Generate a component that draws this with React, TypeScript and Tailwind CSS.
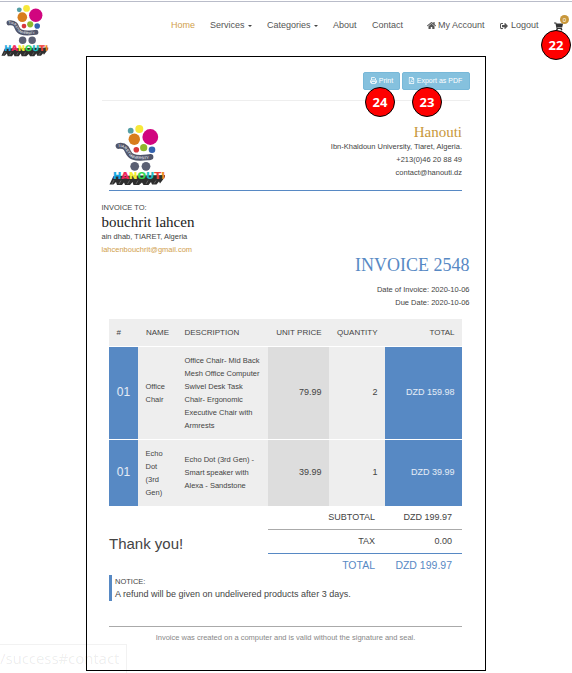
import React from "react";
import { FaHome, FaSignOutAlt, FaShoppingCart, FaRegFilePdf } from "react-icons/fa";

const letters: [string, string][] = [
  ["H", "#18a8e0"],
  ["A", "#f0265c"],
  ["N", "#f5ee30"],
  ["O", "#35d850"],
  ["U", "#20bcc4"],
  ["T", "#f04038"],
  ["I", "#f08a20"],
];

function Logo({ className, id }: { className: string; id: string }) {
  return (
    <svg viewBox="0 0 57 61" preserveAspectRatio="none" className={className}>
      <circle cx="21.7" cy="5.7" r="2.9" fill="#559fa5" />
      <circle cx="30.3" cy="4" r="4" fill="#f7e83a" />
      <circle cx="41.3" cy="12" r="7.9" fill="#d1057f" />
      <circle cx="25.3" cy="14.3" r="5.7" fill="#d87d1c" />
      <circle cx="27.3" cy="24.7" r="2.8" fill="#d8383c" />
      <circle cx="34.7" cy="22.7" r="3.6" fill="#8fb82c" />
      <circle cx="43" cy="24.7" r="3.3" fill="#3462ae" />
      <path d="M9.5 21 C12 20.5 15 21 17 23 C20 27 19 30 24 31.8 C30 34 36 32.5 41.5 32" fill="none" stroke="#50556a" strokeWidth="5.8" strokeLinecap="round" />
      <path id={id} d="M9 22 C12 21.8 15 22.5 16.6 25 C20 29.5 20 32 25 33.2 C31 35 37 34 44 33.4" fill="none" />
      <text fontSize="3.8" fontWeight="700" fill="#d8d9df" fontFamily="Liberation Sans, sans-serif">
        <textPath href={"#" + id} textLength="36">TIARET UNIVERSITY</textPath>
      </text>
      <circle cx="25.7" cy="41.3" r="4.4" fill="#5a5f73" />
      <circle cx="37" cy="41.3" r="4.4" fill="#5a5f73" />
      <path d="M4.5 51 L0.5 59.5 H4.5 L7 57 L8 60 H13 L15 57.5 L16 60 H21 L23.5 57 L24.5 60 H30 L33 57.5 L34.5 60 H39.5 L42 57 L43 59.5 H47.5 L50 56.5 L51 58.5 L56 52 V50 Z" fill="#2e2e2e" />
      <path d="M3 59 L5 55 M10 59 L12 55.5 M18.5 59 L20.5 55.5 M27 59 L29 55.5 M37 59 L39 55.5 M45 58.5 L47 55.5" stroke="#777" strokeWidth=".7" />
      <text x="3.9" y="54.3" fontSize="9.2" fontWeight="700" strokeWidth=".2" fontFamily="DejaVu Sans, sans-serif" textLength="52" lengthAdjust="spacingAndGlyphs">
        {letters.map(([l, c]) => (
          <tspan key={l} fill={c} stroke={c}>{l}</tspan>
        ))}
      </text>
    </svg>
  );
}

function PrintIcon() {
  return (
    <svg viewBox="0 0 14 14" className="h-[7px] w-[7px]" fill="none" stroke="currentColor" strokeWidth="1.6">
      <path d="M3 6V1h6l2 2v3M3 11H1V8q0-2 2-2h8q2 0 2 2v3h-2M3 9h8v4H3z" />
    </svg>
  );
}

function Step({ n, className }: { n: string; className: string }) {
  return (
    <div className={`absolute flex size-[30px] items-center justify-center rounded-full border border-black bg-[#fe0000] font-['Open_Sans','Noto_Sans',sans-serif] text-[13px] font-bold leading-none text-white ${className}`}>
      {n}
    </div>
  );
}

function Caret() {
  return <i className="ml-[3px] inline-block border-x-2 border-t-2 border-x-transparent border-t-[#444]" />;
}

const cols = "grid grid-cols-[29px_39px_91px_61px_56px_77px]";

const items = [
  { name: ["Office", "Chair"], desc: ["Office Chair- Mid Back", "Mesh Office Computer", "Swivel Desk Task", "Chair- Ergonomic", "Executive Chair with", "Armrests"], price: "79.99", qty: "2", total: "DZD 159.98", h: "h-[92px]" },
  { name: ["Echo", "Dot", "(3rd", "Gen)"], desc: ["Echo Dot (3rd Gen) -", "Smart speaker with", "Alexa - Sandstone"], price: "39.99", qty: "1", total: "DZD 39.99", h: "h-[66px]" },
];

function Lines({ lines }: { lines: string[] }) {
  return (
    <div className="flex flex-col justify-center bg-[#eee] pb-px pl-[7.5px]">
      {lines.map((l) => (
        <div key={l} className="h-[13px] whitespace-nowrap">{l}</div>
      ))}
    </div>
  );
}

export default function App() {
  return (
    <div className="relative h-[673px] w-[572px] overflow-hidden bg-white font-['Liberation_Sans',Arial,sans-serif] text-[7.5px] leading-[13px] text-[#444]">
      <header className="flex h-[56px] pt-px">
        <div className="w-[171px] border-t border-[#b9bcc9] pl-px pt-[3px]">
          <Logo id="arc-nav" className="h-[52px] w-[48px]" />
        </div>
        <nav className="flex flex-1 whitespace-nowrap border-t border-[#b9bcc9] pt-[17px] text-[9px] text-[#555]">
          <span className="w-[39px] text-[#d0a04c]">Home</span>
          <span className="flex w-[57px] items-center self-start">Services<Caret /></span>
          <span className="flex w-[66px] items-center self-start">Categories<Caret /></span>
          <span className="w-[39px]">About</span>
          <span className="w-[55px]">Contact</span>
          <span className="flex w-[73px] items-center gap-[2px] self-start"><FaHome className="size-[9px]" />My Account</span>
          <span className="flex w-[54px] items-center gap-[3px] self-start"><FaSignOutAlt className="size-[8px]" />Logout</span>
          <span className="relative pt-[3px] text-[#333]">
            <FaShoppingCart className="size-[9px]" />
            <b className="absolute -top-[4px] left-[6px] flex size-[9px] items-center justify-center rounded-full bg-[#c8973a] text-[6px] font-normal leading-none text-white">0</b>
          </span>
        </nav>
      </header>

      <main className="ml-[86px] h-[615px] w-[400px] border border-black px-[15px] pt-[15px]">
        <div className="flex h-[29px] items-start justify-end gap-[2px] border-b border-[#eee] text-[7px] text-white">
          <button className="flex h-[18px] w-[37px] items-center justify-center gap-[2px] rounded-[2px] border border-[#78b8d8] bg-[#85c1de] pb-px"><PrintIcon />Print</button>
          <button className="flex h-[18px] w-[68px] items-center justify-center gap-[2px] whitespace-nowrap rounded-[2px] border border-[#78b8d8] bg-[#85c1de] pb-px pr-[2px]"><FaRegFilePdf className="size-[7px]" />Export as PDF</button>
        </div>

        <div className="ml-[7px] mr-[8px] mt-[24px] flex h-[66px] justify-between border-b border-[#5789c4]">
          <Logo id="arc-invoice" className="h-[61px] w-[57px]" />
          <div className="text-right">
            <h2 className="h-[15px] font-['Liberation_Serif',serif] text-[15px] leading-[15px] text-[#c8973a]">Hanouti</h2>
            <div>Ibn-Khaldoun University, Tiaret, Algeria.</div>
            <div>+213(0)46 20 88 49</div>
            <div>contact@hanouti.dz</div>
          </div>
        </div>

        <section className="-ml-[0.5px] h-[65px] pt-[10px]">
          <div className="h-[12px]">INVOICE TO:</div>
          <h2 className="h-[17px] font-['Liberation_Serif',serif] text-[15px] leading-[19px] text-[#222]">bouchrit lahcen</h2>
          <div>ain dhab, TIARET, Algeria</div>
          <div className="text-[#d0a04c]">lahcenbouchrit@gmail.com</div>
        </section>

        <section className="mr-[0.5px] h-[63px] text-right">
          <h1 className="h-[27px] font-['Liberation_Serif',serif] text-[18px] leading-[19px] text-[#5789c4]">INVOICE 2548</h1>
          <div>Date of Invoice: 2020-10-06</div>
          <div>Due Date: 2020-10-06</div>
        </section>

        <div className="ml-[7px] w-[353px]">
          <div className={`${cols} h-[27px] items-center bg-[#eee] text-[8px] whitespace-nowrap`}>
            <span className="pl-[7.5px]">#</span>
            <span className="pl-[8px]">NAME</span>
            <span className="pl-[7.5px]">DESCRIPTION</span>
            <span className="pr-[7.5px] text-right">UNIT PRICE</span>
            <span className="pr-[7.5px] text-right">QUANTITY</span>
            <span className="pr-[7.5px] text-right">TOTAL</span>
          </div>
          {items.map((it) => (
            <div key={it.total} className={`${cols} ${it.h} mt-px`}>
              <div className="flex items-center justify-center bg-[#5789c4] pb-[2px] text-[12px] text-white/85">01</div>
              <Lines lines={it.name} />
              <Lines lines={it.desc} />
              <div className="flex items-center justify-end bg-[#ddd] pb-[2px] pr-[7.5px] text-[9px]">{it.price}</div>
              <div className="flex items-center justify-end bg-[#eee] pb-[2px] pr-[7.5px] text-[9px]">{it.qty}</div>
              <div className="flex items-center justify-end bg-[#5789c4] pb-[2px] pr-[7.5px] text-[9px] text-white/85">{it.total}</div>
            </div>
          ))}

          <div className="flex h-[69px] justify-between">
            <div className="pt-[28px] text-[15px] leading-[20px]">Thank you!</div>
            <div className="w-[194px] text-right text-[9px] [&>div]:grid [&>div]:grid-cols-[107px_77px] [&>div]:items-center">
              <div className="h-[24px] border-b border-[#aaa]"><span>SUBTOTAL</span><span>DZD 199.97</span></div>
              <div className="h-[24px] border-b border-[#5789c4]"><span>TAX</span><span>0.00</span></div>
              <div className="h-[23px] text-[10.5px] text-[#5789c4]"><span>TOTAL</span><span>DZD 199.97</span></div>
            </div>
          </div>

          <div className="h-[26px] border-l-[3px] border-[#5789c4] pl-[3px]">
            <div>NOTICE:</div>
            <div className="text-[9px] leading-[12px]">A refund will be given on undelivered products after 3 days.</div>
          </div>

          <footer className="mt-[25px] border-t border-[#aaa] pt-[4px] text-center text-[#888]">
            Invoice was created on a computer and is valid without the signature and seal.
          </footer>
        </div>
      </main>

      <Step n="22" className="left-[541px] top-[30px]" />
      <Step n="24" className="left-[365px] top-[87px]" />
      <Step n="23" className="left-[412px] top-[87px]" />

      <div className="absolute left-0 top-[644px] h-[29px] w-[127px] whitespace-nowrap border-r border-t border-black/5 font-['Noto_Sans','Open_Sans',sans-serif] text-[15px] leading-[27px] tracking-[-0.1px] text-black/[0.08]">
        /success#contact
      </div>
    </div>
  );
}
